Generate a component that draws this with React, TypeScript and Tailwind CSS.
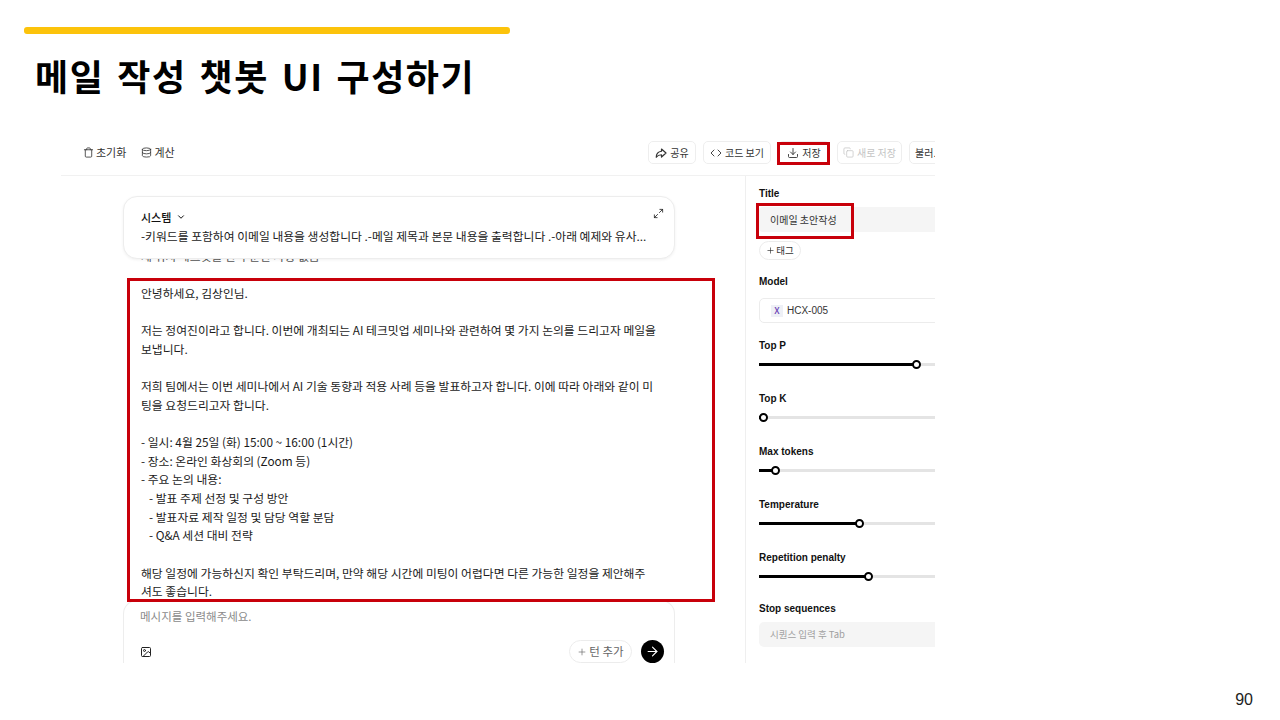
import { ArrowRight, ChevronDown, Code, Copy, Database, Download, Image as ImageIcon, Maximize2, Plus, Trash } from "lucide-react";

const font = { fontFamily: '"Noto Sans CJK KR", "Liberation Sans", sans-serif' };
const latin = { fontFamily: '"Liberation Sans", "Noto Sans CJK KR", sans-serif' };

const sliders = [
  { name: "Top P", pct: 157, h: "h-[53px]" },
  { name: "Top K", pct: 4, h: "h-[53px]" },
  { name: "Max tokens", pct: 16, h: "h-[53px]" },
  { name: "Temperature", pct: 100, h: "h-[52.5px]" },
  { name: "Repetition penalty", pct: 109, h: "h-[51px]" },
];

function ShareIcon() {
  return (
    <svg width="12" height="12" viewBox="0 0 24 24" fill="none" stroke="currentColor" strokeWidth="2.4" strokeLinejoin="round">
      <path d="M13 4l9 8-9 8v-4.5c-5 0-8 1.500-10.500 5 0-6.500 4-11 10.500-12z" />
    </svg>
  );
}

function ToolButton({ icon, label, muted, w }: { icon: React.ReactNode; label: string; muted?: boolean; w: string }) {
  return (
    <div className={`${w} h-[23px] shrink-0 flex items-center justify-center gap-[3px] rounded-[5px] border border-[#eeeeee] text-[10px] ${muted ? "text-[#c4c4c4]" : "text-[#333333]"}`}>
      {icon}
      <span className="whitespace-nowrap">{label}</span>
    </div>
  );
}

function Slider({ name, pct, h }: { name: string; pct: number; h: string }) {
  return (
    <div className={`${h} shrink-0`}>
      <div className="text-[10px] leading-[14px] font-bold text-[#111111]">{name}</div>
      <div className="relative mt-[10px] h-[3px] w-full bg-[#e4e4e4]">
        <div className="h-[3px] bg-black" style={{ width: pct }} />
        <div className="absolute top-[-3px] h-[9px] w-[9px] rounded-full border-2 border-black bg-white" style={{ left: pct - 4 }} />
      </div>
    </div>
  );
}

export default function App() {
  return (
    <div style={font} className="relative w-[1280px] h-[720px] overflow-hidden bg-white">
      <div className="ml-[24px] mt-[27px] h-[7px] w-[486px] rounded-[3px] bg-[#fcc30b]" />
      <h1 className="ml-[35px] mt-[17px] h-[48px] text-[36px] leading-[48px] font-bold tracking-[1.6px] text-black [word-spacing:3px]">
        메일 작성 챗봇 UI 구성하기
      </h1>

      {/* screenshot */}
      <div className="ml-[61px] mt-[34px] flex h-[530px] w-[874px] flex-col overflow-hidden bg-white">
        <div className="flex h-[43px] shrink-0 items-center border-b border-[#f1f1f1] pb-[3px] pl-[22px]">
          <div className="flex items-center gap-[2px] text-[11px] text-[#333333]">
            <Trash size={11} strokeWidth={1.8} />
            <span>초기화</span>
          </div>
          <div className="ml-[15px] flex items-center gap-[2px] text-[11px] text-[#333333]">
            <Database size={11} strokeWidth={1.8} />
            <span>계산</span>
          </div>
          <div className="ml-auto flex w-[287px] shrink-0 items-center gap-[7px] overflow-hidden">
            <ToolButton w="w-[48px]" icon={<ShareIcon />} label="공유" />
            <ToolButton w="w-[68px]" icon={<Code size={12} strokeWidth={1.8} />} label="코드 보기" />
            <ToolButton w="w-[52px]" icon={<Download size={12} strokeWidth={1.8} />} label="저장" />
            <ToolButton w="w-[65px]" muted icon={<Copy size={11} strokeWidth={1.6} />} label="새로 저장" />
            <div className="flex h-[23px] w-[60px] shrink-0 items-center rounded-[5px] border border-[#eeeeee] pl-[5px] text-[10px] text-[#333333]">불러.</div>
          </div>
        </div>

        <div className="flex min-h-0 flex-1">
          {/* chat */}
          <div className="relative flex w-[684px] shrink-0 flex-col">
            <div className="min-h-0 flex-1 overflow-hidden pl-[80px] pt-[71px] text-[11.8px] leading-[18.62px] text-[#1a1a1a]">
              <p className="text-[#555555]">제 위치 테크밋을 한 구분한 사항 없음</p>
              <p className="mt-[18.62px]">안녕하세요, 김상인님.</p>
              <p className="mt-[18.62px]">저는 정여진이라고 합니다. 이번에 개최되는 AI 테크밋업 세미나와 관련하여 몇 가지 논의를 드리고자 메일을</p>
              <p>보냅니다.</p>
              <p className="mt-[18.62px]">저희 팀에서는 이번 세미나에서 AI 기술 동향과 적용 사례 등을 발표하고자 합니다. 이에 따라 아래와 같이 미</p>
              <p>팅을 요청드리고자 합니다.</p>
              <p className="mt-[18.62px]">- 일시: 4월 25일 (화) 15:00 ~ 16:00 (1시간)</p>
              <p>- 장소: 온라인 화상회의 (Zoom 등)</p>
              <p>- 주요 논의 내용:</p>
              <p className="pl-[8px]">- 발표 주제 선정 및 구성 방안</p>
              <p className="pl-[8px]">- 발표자료 제작 일정 및 담당 역할 분담</p>
              <p className="pl-[8px]">- Q&amp;A 세션 대비 전략</p>
              <p className="mt-[18.62px]">해당 일정에 가능하신지 확인 부탁드리며, 만약 해당 시간에 미팅이 어렵다면 다른 가능한 일정을 제안해주</p>
              <p>셔도 좋습니다.</p>
            </div>

            {/* system prompt card, floats over the scrolled messages */}
            <div className="absolute left-[62px] top-[20px] h-[63px] w-[552px] rounded-[14px] border border-[#ededed] bg-white pl-[17px] pr-[12px] pt-[12px] shadow-[0_1px_3px_rgba(0,0,0,0.06)]">
              <div className="flex items-center gap-[5px] text-[11px] leading-[16px] font-medium text-[#111111]">
                시스템 <ChevronDown size={10} strokeWidth={2.4} />
              </div>
              <p className="mt-[2px] overflow-hidden whitespace-nowrap text-[11.8px] leading-[18px] text-[#222222]">
                -키워드를 포함하여 이메일 내용을 생성합니다 .-메일 제목과 본문 내용을 출력합니다 .-아래 예제와 유사...
              </p>
              <Maximize2 size={11} strokeWidth={1.8} className="absolute right-[10px] top-[11px] text-[#222222]" />
            </div>

            {/* composer */}
            <div className="ml-[62px] h-[63px] w-[552px] shrink-0 overflow-hidden rounded-t-[14px] border border-b-0 border-[#ededed] bg-white pl-[16px] pr-[10px] pt-[6px]">
              <div className="text-[11.5px] leading-[18px] text-[#8a8a8a]">메시지를 입력해주세요.</div>
              <div className="mt-[15px] flex items-center justify-between">
                <ImageIcon size={12} strokeWidth={2} className="text-[#222222]" />
                <div className="flex items-center gap-[9px]">
                  <div className="flex h-[23px] w-[63px] items-center justify-center gap-[2px] rounded-full border border-[#ececec] text-[11.5px] text-[#666666]">
                    <Plus size={10} strokeWidth={1.6} />턴 추가
                  </div>
                  <div className="flex h-[23px] w-[23px] items-center justify-center rounded-full bg-black text-white">
                    <ArrowRight size={15} strokeWidth={1.8} />
                  </div>
                </div>
              </div>
            </div>
          </div>

          {/* parameters */}
          <div className="min-w-0 flex-1 overflow-hidden border-l border-[#efefef] pl-[13px] pt-[11px]">
            <div className="w-[240px]">
              <div style={latin} className="text-[10px] leading-[14px] font-bold text-[#111111]">Title</div>
              <div className="mt-[6px] flex h-[25px] items-center rounded-l-[4px] bg-[#f5f5f5] pl-[11px] text-[10px] text-[#333333]">이메일 초안작성</div>
              <div className="mt-[9px] flex h-[19px] w-[42px] items-center justify-center gap-[1px] rounded-full border border-[#ececec] text-[9.5px] text-[#333333]">
                <Plus size={9} strokeWidth={1.8} />태그
              </div>
              <div style={latin} className="mt-[15px] text-[10px] leading-[14px] font-bold text-[#111111]">Model</div>
              <div className="mt-[9px] flex h-[25px] items-center gap-[4px] rounded-l-[5px] border border-[#ececec] pl-[11px] text-[10px] text-[#333333]">
                <span className="flex h-[12px] w-[12px] items-center justify-center bg-[#eef0f6] text-[9px] font-medium text-[#6a3fb5]">X</span>
                <span style={latin}>HCX-005</span>
              </div>
              <div className="mt-[16px]" style={latin}>
                {sliders.map((s) => (
                  <Slider key={s.name} {...s} />
                ))}
              </div>
              <div className="text-[10px] leading-[14px] font-bold text-[#111111]" style={latin}>Stop sequences</div>
              <div className="mt-[6px] flex h-[25px] items-center rounded-l-[5px] bg-[#f5f5f5] pl-[11px] text-[9.5px] text-[#a0a0a0]">시퀀스 입력 후 Tab</div>
            </div>
          </div>
        </div>
      </div>

      <div className="absolute right-[27px] top-[690px] text-[16px] leading-[20px] text-[#222222]" style={latin}>90</div>

      {/* red callouts drawn over the screenshot */}
      <div className="absolute left-[777px] top-[142px] h-[23px] w-[53px] border-[3px] border-[#c8000a]" />
      <div className="absolute left-[756px] top-[203px] h-[36px] w-[98px] border-[3px] border-[#c8000a]" />
      <div className="absolute left-[127px] top-[278px] h-[324px] w-[588px] border-[3px] border-[#c8000a]" />
    </div>
  );
}
